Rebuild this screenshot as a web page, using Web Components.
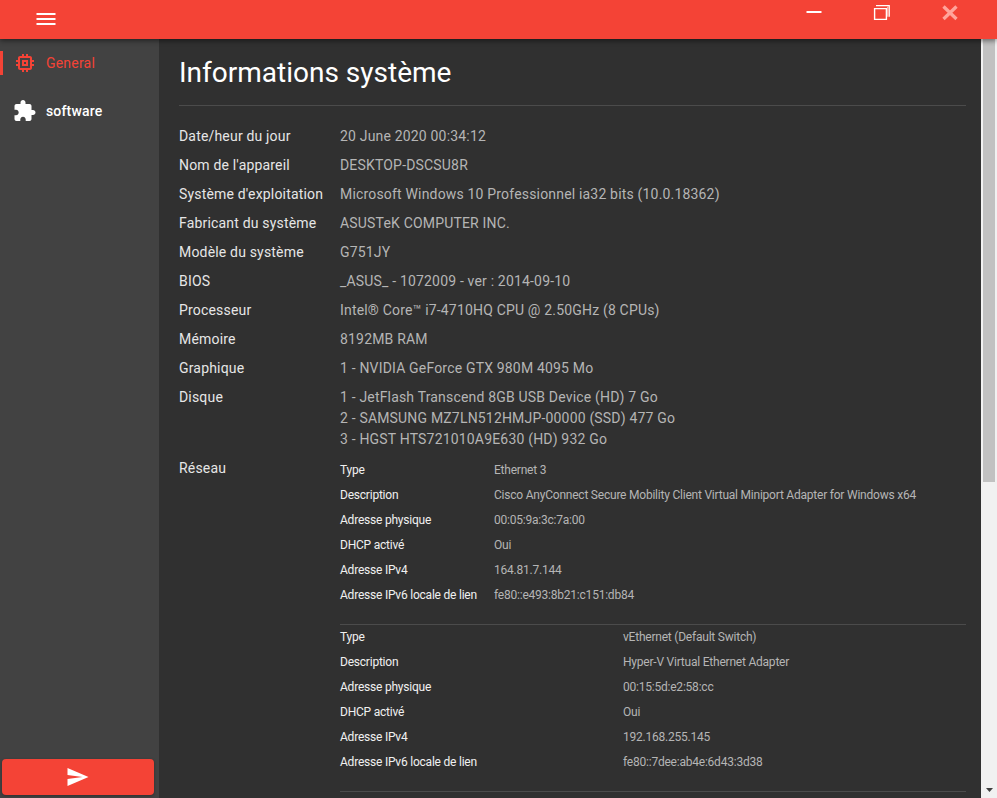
<!DOCTYPE html>
<html lang="fr">
<head>
<meta charset="utf-8">
<title>Informations système</title>
<style>
html,body{margin:0;height:100%;overflow:hidden;background:#303030}
body{font-family:Roboto,"Liberation Sans",sans-serif;color:#fff}
</style>
</head>
<body>
<system-app></system-app>
<script>
const define = (name, html, setup) => customElements.define(name, class extends HTMLElement {
  constructor() {
    super();
    const t = document.createElement('template');
    t.innerHTML = html;
    this.attachShadow({mode: 'open'}).append(t.content.cloneNode(true));
  }
  connectedCallback() { if (setup) setup(this, this.shadowRoot); }
});

define('title-bar', `
<style>
:host{display:flex;justify-content:space-between;height:39px;background:#f44336;box-shadow:0 2px 5px rgba(0,0,0,.45);position:relative;z-index:2;box-sizing:border-box}
svg{display:block}
.menu{margin:7px 0 0 34px}
.controls{display:flex;gap:48px;margin:3px 37px 0 0}
</style>
<svg class="menu" width="24" height="24" viewBox="0 0 24 24" fill="#fff"><path d="M2.500 18h19v-2h-19v2zm0-5h19v-2h-19v2zm0-7v2h19V6h-19z"/></svg>
<div class="controls">
<svg width="20" height="20" viewBox="0 0 20 20"><path d="M2.500 9h15" stroke="#fff" stroke-width="2"/></svg>
<svg width="20" height="20" viewBox="0 0 20 20" fill="none" stroke="#fff"><path d="M2.600 5.600h11.800v10.800H2.600z" stroke-width="1.400"/><path d="M4 2.700h13.200v11" stroke-width="1.300"/><path d="M15.700 3.500v10.200" stroke="#ffb0a9" stroke-width="1.500"/></svg>
<svg width="20" height="20" viewBox="0 0 20 20"><path d="m3.500 3.500 13 12.500m0-12.500-13 12.500" stroke="#ffa49b" stroke-width="3.300"/></svg>
</div>`);

define('nav-item', `
<style>
:host{display:flex;align-items:center;height:48px;padding-left:13px;gap:9px;font-size:14px;font-weight:500;letter-spacing:.16px;line-height:20px;box-sizing:border-box;position:relative}
:host([active]){color:#f44336;font-weight:400;letter-spacing:.2px}
:host([active])::before{content:"";position:absolute;left:0;top:12px;width:3px;height:24px;background:#f44336}
::slotted(svg){display:block;width:24px;height:24px;fill:currentColor}
</style>
<slot name="icon"></slot><slot></slot>`);

define('side-bar', `
<style>
:host{display:flex;flex-direction:column;justify-content:space-between;width:159px;flex:none;background:#424242;box-sizing:border-box}
button{display:flex;align-items:center;justify-content:center;width:152px;height:36px;margin:0 0 3px 2px;padding:0;border:0;border-radius:4px;background:#f44336;box-shadow:0 1px 3px rgba(0,0,0,.3)}
</style>
<nav>
<nav-item active><svg slot="icon" viewBox="0 0 24 24"><path d="M15 9H9v6h6V9zm-2 4h-2v-2h2v2zm8-2V9h-2V7c0-1.100-.9-2-2-2h-2V3h-2v2h-2V3H9v2H7c-1.100 0-2 .9-2 2v2H3v2h2v2H3v2h2v2c0 1.100.9 2 2 2h2v2h2v-2h2v2h2v-2h2c1.100 0 2-.9 2-2v-2h2v-2h-2v-2h2zm-4 6H7V7h10v10z"/></svg>General</nav-item>
<nav-item><svg slot="icon" viewBox="0.5 0 24 24"><path d="M20.500 11H19V7c0-1.100-.9-2-2-2h-4V3.500C13 2.120 11.880 1 10.500 1S8 2.120 8 3.500V5H4c-1.100 0-1.990.9-1.990 2v3.800H3.500c1.490 0 2.700 1.210 2.700 2.700s-1.210 2.700-2.700 2.700H2V20c0 1.100.9 2 2 2h3.800v-1.500c0-1.490 1.210-2.700 2.700-2.700 1.490 0 2.700 1.210 2.700 2.700V22H17c1.100 0 2-.9 2-2v-4h1.500c1.380 0 2.500-1.120 2.500-2.500S21.880 11 20.500 11z"/></svg>software</nav-item>
</nav>
<button aria-label="Envoyer"><svg width="24" height="24" viewBox="0.5 0 24 24" fill="#fff"><path d="M2.010 21L23 12 2.010 3 2 10l15 2-15 2z"/></svg></button>`);

define('info-row', `
<style>
:host{display:grid;grid-template-columns:161px 1fr;font-size:14px;line-height:21px;padding-bottom:8px}
.label{color:#e6e6e6;letter-spacing:.18px}
.value{color:#b5b5b5;letter-spacing:.18px;white-space:pre-line;min-width:0}
</style>
<div class="label"></div><div class="value"><slot></slot></div>`,
(el, root) => { root.querySelector('.label').textContent = el.getAttribute('label'); });

define('net-adapter', `
<style>
:host{display:grid;grid-template-columns:var(--label-width) 1fr;font-size:12px;line-height:25px;letter-spacing:-.22px}
.k{color:#f0f0f0}.v{color:#b5b5b5;white-space:nowrap}
</style>`,
(el, root) => {
  const labels = ['Type', 'Description', 'Adresse physique', 'DHCP activé', 'Adresse IPv4', 'Adresse IPv6 locale de lien'];
  el.getAttribute('values').split('|').forEach((value, i) => {
    for (const [cls, text] of [['k', labels[i]], ['v', value]]) {
      const d = document.createElement('div');
      d.className = cls; d.textContent = text; root.append(d);
    }
  });
});

define('system-info', `
<style>
:host{display:block;flex:1;min-width:0;padding:0 15px 0 20px;overflow:hidden;background:#303030}
h1{margin:0;height:66px;box-sizing:border-box;padding-top:16px;font-size:28px;font-weight:400;line-height:36px}
hr{margin:0;border:0;height:1px;background:#4b4b4b}
section{padding-top:20px}
net-adapter{--label-width:154px;padding-bottom:16px}
.second{--label-width:283px}
</style>
<h1>Informations système</h1><hr>
<section>
<info-row label="Date/heur du jour">20 June 2020 00:34:12</info-row>
<info-row label="Nom de l'appareil">DESKTOP-DSCSU8R</info-row>
<info-row label="Système d'exploitation">Microsoft Windows 10 Professionnel ia32 bits (10.0.18362)</info-row>
<info-row label="Fabricant du système">ASUSTeK COMPUTER INC.</info-row>
<info-row label="Modèle du système">G751JY</info-row>
<info-row label="BIOS">_ASUS_ - 1072009 - ver : 2014-09-10</info-row>
<info-row label="Processeur">Intel® Core™ i7-4710HQ CPU @ 2.50GHz (8 CPUs)</info-row>
<info-row label="Mémoire">8192MB RAM</info-row>
<info-row label="Graphique">1 - NVIDIA GeForce GTX 980M 4095 Mo</info-row>
<info-row label="Disque">1 - JetFlash Transcend 8GB USB Device (HD) 7 Go
2 - SAMSUNG MZ7LN512HMJP-00000 (SSD) 477 Go
3 - HGST HTS721010A9E630 (HD) 932 Go</info-row>
<info-row label="Réseau"><net-adapter values="Ethernet 3|Cisco AnyConnect Secure Mobility Client Virtual Miniport Adapter for Windows x64|00:05:9a:3c:7a:00|Oui|164.81.7.144|fe80::e493:8b21:c151:db84"></net-adapter><hr><net-adapter class="second" values="vEthernet (Default Switch)|Hyper-V Virtual Ethernet Adapter|00:15:5d:e2:58:cc|Oui|192.168.255.145|fe80::7dee:ab4e:6d43:3d38"></net-adapter><hr></info-row>
</section>`);

define('scroll-bar', `
<style>
:host{display:flex;flex-direction:column;justify-content:space-between;align-items:center;width:16px;flex:none;background:#f1f1f1}
.thumb{width:12px;height:443px;background:#c1c1c1}
svg{display:block;margin-bottom:5px}
</style>
<div class="thumb"></div><svg width="7" height="5" viewBox="0 0 7 5"><path d="M0 0h7L3.500 4z" fill="#404040"/></svg>`);

define('system-app', `
<style>
:host{display:flex;flex-direction:column;height:100vh;width:100%}
main{display:flex;flex:1;min-height:0}
</style>
<title-bar></title-bar><main><side-bar></side-bar><system-info></system-info><scroll-bar></scroll-bar></main>`);
</script>
</body>
</html>
